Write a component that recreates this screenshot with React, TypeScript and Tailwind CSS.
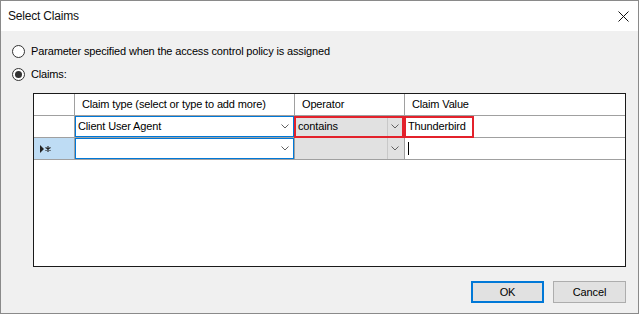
import React from "react";

const Chevron = () => (
  <svg width="8" height="5" viewBox="0 0 8 5" className="block">
    <path d="M0.5 0.5 L4 4 L7.5 0.5" fill="none" stroke="#606060" strokeWidth="1" />
  </svg>
);

const Radio = ({ checked }: { checked?: boolean }) => (
  <div className="w-[13px] h-[13px] rounded-full border border-[#333] bg-white flex items-center justify-center">
    {checked && <div className="w-[7px] h-[7px] rounded-full bg-[#333]" />}
  </div>
);

const cell = "border-r border-b border-[#a0a0a0] flex items-center";

export default function App() {
  return (
    <div
      className="w-[639px] h-[315px] bg-white text-black"
      style={{ fontFamily: '"Liberation Sans", Arial, sans-serif' }}
    >
      <div className="w-[639px] h-[314px] border border-[#8a8a8a] bg-[#f0f0f0] flex flex-col">
        {/* Title bar */}
        <div className="h-[30px] bg-white flex items-center justify-between pl-[7px] pr-[9px] shrink-0">
          <span className="text-[12px] tracking-[-0.2px] text-[#111]">Select Claims</span>
          <svg width="11" height="11" viewBox="0 0 11 11">
            <path d="M0.5 0.5 L10.5 10.5 M10.5 0.5 L0.5 10.5" stroke="#111" strokeWidth="1" />
          </svg>
        </div>

        {/* Body */}
        <div className="flex flex-col text-[11px] tracking-[-0.15px]">
          <div className="mt-[12px] ml-[11px] h-[16px] flex items-center gap-[6px]">
            <Radio />
            <span>Parameter specified when the access control policy is assigned</span>
          </div>
          <div className="mt-[7px] ml-[11px] h-[16px] flex items-center gap-[6px]">
            <Radio checked />
            <span>Claims:</span>
          </div>

          {/* Grid */}
          <div className="mt-[11px] ml-[32px] w-[593px] h-[174px] border border-[#1a1a1a] bg-white relative">
            <div className="grid grid-cols-[41px_220px_110px_1fr] grid-rows-[22px_22px_22px]">
              {/* Header */}
              <div className={cell} />
              <div className={cell + " pl-[7px]"}>Claim type (select or type to add more)</div>
              <div className={cell + " pl-[7px]"}>Operator</div>
              <div className="border-b border-[#a0a0a0] flex items-center pl-[7px]">Claim Value</div>

              {/* Row 1 */}
              <div className={cell} />
              <div className="border-r border-b border-[#a0a0a0]">
                <div className="w-full h-full border border-[#0078d7] flex items-center justify-between pl-[2px] pr-[4px]">
                  <span>Client User Agent</span>
                  <Chevron />
                </div>
              </div>
              <div className={cell + " bg-[#e1e1e1] justify-between"}>
                <span className="pl-[3px]">contains</span>
                <div className="w-[17px] h-full border-l border-[#c8c8c8] flex items-center justify-start pl-[3px]">
                  <Chevron />
                </div>
              </div>
              <div className="border-b border-[#a0a0a0] flex items-center pl-[3px]">Thunderbird</div>

              {/* Row 2 */}
              <div className={cell + " bg-[#bedcf4] pl-[6px]"}>
                <svg width="12" height="8" viewBox="0 0 12 8">
                  <path d="M0 0 L4 4 L0 8 Z" fill="#222" />
                  <path d="M8 1 L8 7 M5.5 2.5 L10.5 5.5 M10.5 2.5 L5.5 5.5" stroke="#222" strokeWidth="1.1" />
                </svg>
              </div>
              <div className="border-r border-b border-[#a0a0a0]">
                <div className="w-full h-full border border-[#0078d7] flex items-center justify-end pr-[4px]">
                  <Chevron />
                </div>
              </div>
              <div className={cell + " bg-[#e1e1e1] justify-end"}>
                <div className="w-[17px] h-full border-l border-[#c8c8c8] flex items-center justify-start pl-[3px]">
                  <Chevron />
                </div>
              </div>
              <div className="border-b border-[#a0a0a0] flex items-center pl-[3px]">
                <div className="w-[1px] h-[13px] bg-black" />
              </div>
            </div>

            {/* Red annotation boxes */}
            <div className="absolute left-[260px] top-[22px] w-[110px] h-[22px] border-2 border-[#e3212b]" />
            <div className="absolute left-[370px] top-[22px] w-[70px] h-[22px] border-2 border-[#e3212b]" />
          </div>

          {/* Buttons */}
          <div className="mt-[14px] flex justify-end gap-[9px] pr-[12px]">
            <button className="w-[73px] h-[22px] bg-[#e1e1e1] border-2 border-[#0078d7] flex items-center justify-center text-[11px]">
              OK
            </button>
            <button className="w-[73px] h-[22px] bg-[#e1e1e1] border border-[#adadad] flex items-center justify-center text-[11px]">
              Cancel
            </button>
          </div>
        </div>
      </div>
    </div>
  );
}
